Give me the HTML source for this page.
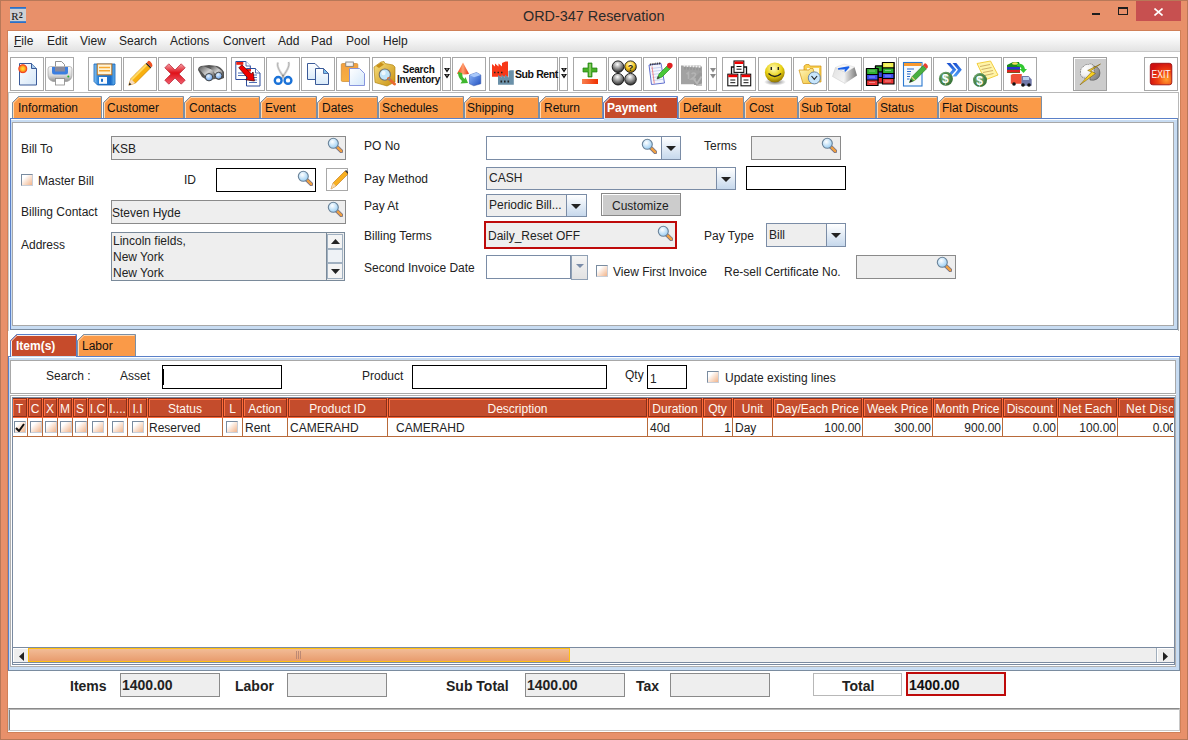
<!DOCTYPE html>
<html><head><meta charset="utf-8"><style>
html,body{margin:0;padding:0;width:1188px;height:740px;overflow:hidden;background:#E8906A;}
body{position:relative;font-family:"Liberation Sans", sans-serif;}
body div{position:absolute;}
.t{white-space:nowrap;}
</style></head><body>
<div style="left:0px;top:0px;width:1188px;height:740px;background:#E8906A;"></div>
<div style="left:0px;top:0px;width:1188px;height:1px;background:#B87858;"></div>
<div style="left:0px;top:0px;width:1px;height:740px;background:#B87858;"></div>
<div style="left:1187px;top:0px;width:1px;height:740px;background:#B87858;"></div>
<div style="left:0px;top:739px;width:1188px;height:1px;background:#B87858;"></div>
<svg style="position:absolute;left:10px;top:7px" width="16" height="16" viewBox="0 0 16 16"><rect width="16" height="16" fill="#CDD0D4"/><rect width="16" height="1.8" fill="#2A70C8"/><rect y="14.2" width="16" height="1.8" fill="#2A70C8"/><text x="1.2" y="13.2" font-size="11" font-family="Liberation Serif" fill="#111">R</text><text x="8.8" y="11.2" font-size="8" font-weight="bold" font-family="Liberation Serif" fill="#222">2</text></svg>
<div class="t" style="left:523px;top:9px;font-size:14.4px;line-height:15px;color:#2A2A2A">ORD-347 Reservation</div>
<div style="left:1092px;top:13px;width:8px;height:2px;background:#1E1E1E;"></div>
<div style="left:1118px;top:7px;width:10px;height:8px;border:1px solid #1E1E1E;border-top-width:2px;box-sizing:border-box;"></div>
<div style="left:1136px;top:1px;width:45px;height:20px;background:#C75050;"></div>
<svg style="position:absolute;left:1154px;top:8px" width="9" height="8" viewBox="0 0 9 8"><path d="M0.5 0.5 L8.5 7.5 M8.5 0.5 L0.5 7.5" stroke="#fff" stroke-width="1.6"/></svg>
<div style="left:7px;top:30px;width:1174px;height:703px;background:#fff;border:1px solid #D08058;box-sizing:border-box;"></div>
<div style="left:8px;top:31px;width:1172px;height:20px;background:linear-gradient(#ffffff,#fbfbfb 30%,#e3e3e3);"></div>
<div style="left:8px;top:51px;width:1172px;height:1px;background:#C8C8C8;"></div>
<div class="t" style="left:14px;top:35px;font-size:12px;line-height:12px;color:#222;"><u>F</u>ile</div>
<div class="t" style="left:47px;top:35px;font-size:12px;line-height:12px;color:#222;">Edit</div>
<div class="t" style="left:80px;top:35px;font-size:12px;line-height:12px;color:#222;">View</div>
<div class="t" style="left:119px;top:35px;font-size:12px;line-height:12px;color:#222;">Search</div>
<div class="t" style="left:170px;top:35px;font-size:12px;line-height:12px;color:#222;">Actions</div>
<div class="t" style="left:223px;top:35px;font-size:12px;line-height:12px;color:#222;">Convert</div>
<div class="t" style="left:278px;top:35px;font-size:12px;line-height:12px;color:#222;">Add</div>
<div class="t" style="left:311px;top:35px;font-size:12px;line-height:12px;color:#222;">Pad</div>
<div class="t" style="left:346px;top:35px;font-size:12px;line-height:12px;color:#222;">Pool</div>
<div class="t" style="left:383px;top:35px;font-size:12px;line-height:12px;color:#222;">Help</div>
<div style="left:10px;top:57px;width:34px;height:34px;border:1px solid #A8A8A8;box-sizing:border-box;background:#fff;"></div>
<svg style="position:absolute;left:10px;top:57px" width="34" height="34" viewBox="0 0 34 34"><defs><linearGradient id="pg1" x1="0" y1="0" x2="1" y2="1"><stop offset="0" stop-color="#FFFFFF"/><stop offset="1" stop-color="#D4E6F8"/></linearGradient><radialGradient id="sun" cx="0.5" cy="0.5" r="0.5"><stop offset="0" stop-color="#FFE040"/><stop offset="0.45" stop-color="#FFB020"/><stop offset="0.8" stop-color="#F04020"/><stop offset="1" stop-color="#F04020" stop-opacity="0"/></radialGradient></defs>
<path d="M9.5 6.5h12l5 5v16.5h-17z" fill="url(#pg1)" stroke="#3A5A98" stroke-width="1"/><path d="M21.5 6.5v5h5" fill="#A8CCEC" stroke="#3A5A98" stroke-width="1"/><circle cx="12.8" cy="11.7" r="5" fill="url(#sun)"/></svg>
<div style="left:45px;top:57px;width:29px;height:34px;border:1px solid #A8A8A8;box-sizing:border-box;background:#fff;"></div>
<svg style="position:absolute;left:45px;top:57px" width="34" height="34" viewBox="0 0 34 34"><defs><linearGradient id="pb" x1="0" y1="0" x2="0" y2="1"><stop offset="0" stop-color="#FAFAFA"/><stop offset="0.6" stop-color="#D8D8D8"/><stop offset="1" stop-color="#909090"/></linearGradient></defs>
<path d="M10.5 4.5h6l3 3v6h-9z" fill="#fff" stroke="#777" stroke-width="0.8"/><path d="M3 12q0-2.5 2.5-2.5h19q2.5 0 2.5 2.5v6q0 5-5 6.5H8q-5-1.5-5-6.5z" fill="url(#pb)" stroke="#999" stroke-width="0.6"/><path d="M7 10h16v5q0 2.5-2.5 2.5h-11q-2.5 0-2.5-2.5z" fill="#3C7EE0"/><rect x="10" y="10" width="10" height="4.5" fill="#8A8A9A"/><rect x="10.5" y="21.5" width="9" height="6.5" fill="#fff" stroke="#888" stroke-width="0.8"/><circle cx="23.3" cy="19.6" r="1" fill="#20B020"/></svg>
<div style="left:88px;top:57px;width:34px;height:34px;border:1px solid #A8A8A8;box-sizing:border-box;background:#fff;"></div>
<svg style="position:absolute;left:88px;top:57px" width="34" height="34" viewBox="0 0 34 34"><defs><linearGradient id="fl" x1="0" y1="0" x2="1" y2="0"><stop offset="0" stop-color="#8CC8F4"/><stop offset="0.2" stop-color="#2A82D8"/><stop offset="0.8" stop-color="#1A6CC8"/><stop offset="1" stop-color="#6AB8F0"/></linearGradient></defs>
<path d="M6 7h21v20l-1 1H9.5L6 24.5z" fill="url(#fl)" stroke="#1060B8" stroke-width="0.8"/><rect x="9.3" y="7" width="14.5" height="10.8" fill="#FFF4D8" stroke="#C07A28" stroke-width="1"/><path d="M11 10.5h11M11 13.8h11" stroke="#F8A830" stroke-width="1.6"/><rect x="11" y="20" width="8" height="6.8" fill="#F8FBFF"/><rect x="13" y="21.8" width="2" height="3" fill="#1A6CC8"/></svg>
<div style="left:123px;top:57px;width:34px;height:34px;border:1px solid #A8A8A8;box-sizing:border-box;background:#fff;"></div>
<svg style="position:absolute;left:123px;top:57px" width="34" height="34" viewBox="0 0 34 34"><defs><linearGradient id="pshadow" x1="0" y1="0" x2="1" y2="0"><stop offset="0" stop-color="#ccc" stop-opacity="0"/><stop offset="1" stop-color="#bbb" stop-opacity="0.7"/></linearGradient></defs>
<path d="M6 27 L14 14 L10 24z" fill="url(#pshadow)"/><path d="M5.8 28.2l2-6.5 15-15 4.5 4.5-15 15z" fill="#F8B010" stroke="#C87A00" stroke-width="0.6"/><path d="M8 21.8l14.8-14.8 1.5 1.5-14.8 14.8z" fill="#FFD860"/><path d="M5.8 28.2l2-6.5 4.5 4.5z" fill="#F6DCC0"/><path d="M5.8 28.2l0.8-2.6 1.8 1.8z" fill="#222"/><path d="M22.8 6.7l4.5 4.5 1-1-4.5-4.5z" fill="#222"/><path d="M23.8 5.7l4.5 4.5 1.2-1.2q0-2.5-2-4.3t-2.7-0.1z" fill="#F05020"/></svg>
<div style="left:158px;top:57px;width:34px;height:34px;border:1px solid #A8A8A8;box-sizing:border-box;background:#fff;"></div>
<svg style="position:absolute;left:158px;top:57px" width="34" height="34" viewBox="0 0 34 34"><defs><linearGradient id="xg" x1="0" y1="0" x2="0" y2="1"><stop offset="0" stop-color="#F4A0A8"/><stop offset="0.45" stop-color="#E01018"/><stop offset="1" stop-color="#F06070"/></linearGradient></defs>
<path d="M6.8 10.8l4-4 6.2 6.2 6.2-6.2 4 4-6.2 6.2 6.2 6.2-4 4-6.2-6.2-6.2 6.2-4-4 6.2-6.2z" fill="url(#xg)" stroke="#B82030" stroke-width="0.7"/></svg>
<div style="left:193px;top:57px;width:34px;height:34px;border:1px solid #A8A8A8;box-sizing:border-box;background:#fff;"></div>
<svg style="position:absolute;left:193px;top:57px" width="34" height="34" viewBox="0 0 34 34"><defs><linearGradient id="bg1" x1="0" y1="0" x2="1" y2="1"><stop offset="0" stop-color="#555"/><stop offset="0.5" stop-color="#D0D0D0"/><stop offset="1" stop-color="#444"/></linearGradient><radialGradient id="lens" cx="0.4" cy="0.35" r="0.6"><stop offset="0" stop-color="#E8F4FF"/><stop offset="1" stop-color="#70A8F0"/></radialGradient></defs>
<path d="M5 13q0-3 3-4l8-1 8 1q4 1 7 6l0 6-5 2-6-2-6 2-5-3z" fill="#555"/><path d="M6 12q1-2 4-3l10 4 2 9-6 1z" fill="url(#bg1)"/><path d="M17 10l5-1 7 5 1 5-5 2z" fill="url(#bg1)"/><circle cx="16" cy="20.2" r="3.7" fill="url(#lens)" stroke="#444" stroke-width="1"/><circle cx="25.6" cy="18.7" r="3.4" fill="url(#lens)" stroke="#444" stroke-width="1"/></svg>
<div style="left:231px;top:57px;width:34px;height:34px;border:1px solid #A8A8A8;box-sizing:border-box;background:#fff;"></div>
<svg style="position:absolute;left:231px;top:57px" width="34" height="34" viewBox="0 0 34 34"><path d="M4.8 4.5h10l4.5 4.5v13.5H4.8z" fill="#fff" stroke="#2C4C9C" stroke-width="1"/><rect x="5.3" y="5" width="7" height="2.8" fill="#F02010"/><path d="M15 4.5v4.5h4.5" fill="#fff" stroke="#2C4C9C" stroke-width="0.8"/><path d="M7 16h8M7 18.5h8" stroke="#3A60B0" stroke-width="0.9"/><path d="M15.5 11.5h9l4.5 4.5v13H15.5z" fill="#fff" stroke="#2C4C9C" stroke-width="1"/><rect x="16" y="12" width="4" height="2.5" fill="#F02010"/><path d="M24.5 11.5v4.5h4.5" fill="#fff" stroke="#2C4C9C" stroke-width="0.8"/><path d="M18 18h8M18 20.5h8M18 23h8M18 25.5h8" stroke="#3A60B0" stroke-width="0.9"/><path d="M7.8 10.8l3-3 9.5 9 1.8-1.8 1.3 9-8.7-1.2 1.9-1.9z" fill="#F00000" stroke="#400000" stroke-width="0.7"/></svg>
<div style="left:266px;top:57px;width:34px;height:34px;border:1px solid #A8A8A8;box-sizing:border-box;background:#fff;"></div>
<svg style="position:absolute;left:266px;top:57px" width="34" height="34" viewBox="0 0 34 34"><path d="M12 5.5q-1.5 3 2 9l4.8 7.5M22.5 5q1.5 3-2 9l-4.8 7.5" stroke="#D8D8D8" stroke-width="2.4" fill="none"/><path d="M12 5.5q-1.5 3 2 9l4.8 7.5M22.5 5q1.5 3-2 9l-4.8 7.5" stroke="#999" stroke-width="0.6" fill="none"/><circle cx="12.2" cy="23.4" r="3.4" fill="none" stroke="#1A72D8" stroke-width="2.4"/><circle cx="22" cy="23.4" r="3.4" fill="none" stroke="#1A72D8" stroke-width="2.4"/><circle cx="17" cy="18.5" r="1" fill="#888"/></svg>
<div style="left:301px;top:57px;width:34px;height:34px;border:1px solid #A8A8A8;box-sizing:border-box;background:#fff;"></div>
<svg style="position:absolute;left:301px;top:57px" width="34" height="34" viewBox="0 0 34 34"><defs><linearGradient id="cp" x1="0" y1="0" x2="0" y2="1"><stop offset="0" stop-color="#FFFFFF"/><stop offset="1" stop-color="#D8EAFA"/></linearGradient></defs>
<path d="M6.5 6.5h7.5l4 4v12h-11.5z" fill="url(#cp)" stroke="#3A5A98" stroke-width="1"/><path d="M14.5 11.5h8l5 5v11h-13z" fill="url(#cp)" stroke="#3A5A98" stroke-width="1"/><path d="M22.5 11.5v5h5z" fill="#7AC0F0" stroke="#3A5A98" stroke-width="0.8"/></svg>
<div style="left:336px;top:57px;width:34px;height:34px;border:1px solid #A8A8A8;box-sizing:border-box;background:#fff;"></div>
<svg style="position:absolute;left:336px;top:57px" width="34" height="34" viewBox="0 0 34 34"><defs><linearGradient id="cb" x1="0" y1="0" x2="0" y2="1"><stop offset="0" stop-color="#F4A040"/><stop offset="1" stop-color="#F8B040"/></linearGradient><linearGradient id="cp2" x1="0" y1="0" x2="1" y2="1"><stop offset="0" stop-color="#FFFFFF"/><stop offset="1" stop-color="#D4E8FA"/></linearGradient></defs>
<rect x="5.3" y="6.5" width="16.5" height="18" rx="1.2" fill="url(#cb)" stroke="#C88A30" stroke-width="0.7"/><rect x="9.8" y="5" width="7.5" height="4.3" fill="#F4F4F4" stroke="#777" stroke-width="0.8"/><path d="M13.5 11.5h10l5 5v12h-15z" fill="url(#cp2)" stroke="#7A8ADA" stroke-width="0.9"/></svg>
<div style="left:372px;top:57px;width:69px;height:34px;border:1px solid #A8A8A8;box-sizing:border-box;background:#fff;"></div>
<svg style="position:absolute;left:372px;top:57px" width="34" height="34" viewBox="0 0 34 34"><defs><linearGradient id="box1" x1="0" y1="0" x2="1" y2="1"><stop offset="0" stop-color="#F8E080"/><stop offset="1" stop-color="#C89010"/></linearGradient></defs><path d="M2 10l7-5 3-0.5 1 2 8 1.5 2 2v15l-8 4-12-3.5z" fill="url(#box1)" stroke="#A87800" stroke-width="0.6"/><path d="M4 9l5-3.5 3 2-5 3.5z" fill="#C8901A"/><circle cx="12.8" cy="17.6" r="5.6" fill="#C0E4FA" stroke="#707070" stroke-width="1.1"/><circle cx="11.5" cy="16" r="2.2" fill="#fff" opacity="0.7"/><path d="M16.5 21.5l6 5.5" stroke="#E86A30" stroke-width="3" stroke-linecap="round"/><path d="M16.5 21.5l1.5 1.4" stroke="#888" stroke-width="2.6"/></svg>
<div class="t" style="left:396px;top:65px;width:45px;font-size:10px;line-height:9.5px;font-weight:bold;color:#111;text-align:center;letter-spacing:-0.2px">Search<br>Inventory</div>
<div style="left:442px;top:57px;width:9px;height:34px;border:1px solid #A8A8A8;box-sizing:border-box;background:#fff;"></div>
<svg style="position:absolute;left:444px;top:68px" width="6" height="12" viewBox="0 0 6 12"><path d="M0 0h6L3 4.5z M0 6h6L3 10.5z" fill="#111"/><circle cx="3" cy="1.1" r="0.7" fill="#fff"/><circle cx="3" cy="7.1" r="0.7" fill="#fff"/></svg>
<div style="left:452px;top:57px;width:34px;height:34px;border:1px solid #A8A8A8;box-sizing:border-box;background:#fff;"></div>
<svg style="position:absolute;left:452px;top:57px" width="34" height="34" viewBox="0 0 34 34"><defs><linearGradient id="cone" x1="0" y1="0" x2="1" y2="0"><stop offset="0" stop-color="#F04010"/><stop offset="0.5" stop-color="#FFA070"/><stop offset="1" stop-color="#E03010"/></linearGradient><linearGradient id="cube" x1="0" y1="0" x2="1" y2="1"><stop offset="0" stop-color="#90B8F8"/><stop offset="1" stop-color="#2050C0"/></linearGradient></defs>
<path d="M11 5.5l6 11.2q-3 1.5-12 0z" fill="url(#cone)"/><path d="M6 15q0 6 4 9l-1.5 2.5 7.5-0.5-2.5-6-1 2q-2.5-2-2.5-6z" fill="#40B830"/><path d="M17.5 18l7-2.5 4.3 2.5v8.8l-7 2-4.3-2z" fill="url(#cube)" stroke="#2A4AA0" stroke-width="0.5"/><path d="M17.5 18l7-2.5 4.3 2.5-6.8 2.3z" fill="#A8C8FA"/></svg>
<div style="left:489px;top:57px;width:69px;height:34px;border:1px solid #A8A8A8;box-sizing:border-box;background:#fff;"></div>
<svg style="position:absolute;left:489px;top:57px" width="34" height="34" viewBox="0 0 34 34"><path d="M3 19.7V7l3 2.5V6.5l3.5 3V6.5l3.5 3V6l3.5-1.5 2.5 0v15.2z" fill="#F83818"/><path d="M5 15.5h1.5M8.5 15.5h1.5M12 15.5h1.5" stroke="#222" stroke-width="1.6"/><path d="M9 27.8V18l3.5 2.5v-3l3.5 3v-3l3.5 3v-6.5l2-0.8 3.3 0v14.6z" fill="#6A90A8"/><path d="M11.5 24.5h1.6M15 24.5h1.6M18.5 24.5h1.6" stroke="#222" stroke-width="1.8"/></svg>
<div class="t" style="left:515px;top:69px;font-size:10.5px;line-height:10px;font-weight:bold;color:#111;letter-spacing:-0.4px">Sub Rent</div>
<div style="left:559px;top:57px;width:9px;height:34px;border:1px solid #A8A8A8;box-sizing:border-box;background:#fff;"></div>
<svg style="position:absolute;left:561px;top:68px" width="6" height="12" viewBox="0 0 6 12"><path d="M0 0h6L3 4.5z M0 6h6L3 10.5z" fill="#111"/><circle cx="3" cy="1.1" r="0.7" fill="#fff"/><circle cx="3" cy="7.1" r="0.7" fill="#fff"/></svg>
<div style="left:573px;top:57px;width:34px;height:34px;border:1px solid #A8A8A8;box-sizing:border-box;background:#fff;"></div>
<svg style="position:absolute;left:573px;top:57px" width="34" height="34" viewBox="0 0 34 34"><defs><linearGradient id="plg" x1="0" y1="0" x2="1" y2="0"><stop offset="0" stop-color="#40A020"/><stop offset="0.5" stop-color="#D8F4B0"/><stop offset="1" stop-color="#40A020"/></linearGradient><linearGradient id="mg" x1="0" y1="0" x2="1" y2="0"><stop offset="0" stop-color="#F88050"/><stop offset="1" stop-color="#F03000"/></linearGradient></defs>
<path d="M15 6h4v5h5v4h-5v5h-4v-5h-5v-4h5z" fill="#48B028" stroke="#208010" stroke-width="0.7"/><rect x="15.8" y="7" width="2.4" height="12" fill="url(#plg)" opacity="0.8"/><rect x="9" y="22" width="16" height="5" fill="url(#mg)"/></svg>
<div style="left:608px;top:57px;width:34px;height:34px;border:1px solid #A8A8A8;box-sizing:border-box;background:#fff;"></div>
<svg style="position:absolute;left:608px;top:57px" width="34" height="34" viewBox="0 0 34 34"><defs><radialGradient id="gb" cx="0.45" cy="0.3" r="0.75"><stop offset="0" stop-color="#FFFFFF"/><stop offset="0.45" stop-color="#9A9A9A"/><stop offset="1" stop-color="#1A1A1A"/></radialGradient><radialGradient id="yb" cx="0.45" cy="0.3" r="0.75"><stop offset="0" stop-color="#FFFCD0"/><stop offset="0.5" stop-color="#F8C820"/><stop offset="1" stop-color="#705000"/></radialGradient></defs>
<g stroke="#111" stroke-width="0.9"><circle cx="10" cy="9.7" r="5.8" fill="url(#gb)"/><circle cx="22.5" cy="9.7" r="5.8" fill="url(#yb)"/><circle cx="10" cy="22.2" r="5.8" fill="url(#gb)"/><circle cx="22.5" cy="22.2" r="5.8" fill="url(#gb)"/></g><text x="19.8" y="13.5" font-size="9" font-weight="bold" fill="#222" font-family="Liberation Sans">?</text></svg>
<div style="left:643px;top:57px;width:34px;height:34px;border:1px solid #A8A8A8;box-sizing:border-box;background:#fff;"></div>
<svg style="position:absolute;left:643px;top:57px" width="34" height="34" viewBox="0 0 34 34"><path d="M6 8l12-1.5 3.5 19.5-13 1.5z" fill="#F4F6FE" stroke="#5060C8" stroke-width="0.9"/><path d="M7 7.5l11-1.3" stroke="#333" stroke-width="2" stroke-dasharray="1 0.8"/><path d="M8 11.5l11-1.3M8.5 14.5l11-1.3M9 17.5l11-1.3M9.5 20.5l11-1.3M10 23.5l10-1.2" stroke="#A8B8E8" stroke-width="0.6"/><path d="M9 9.5l2.3 17" stroke="#F07070" stroke-width="0.8"/><path d="M14 22l2-5 9-9 3 3-9 9z" fill="#48C838" stroke="#208010" stroke-width="0.6"/><path d="M14 22l1-3 2 2z" fill="#444"/><circle cx="26.8" cy="8.6" r="2.8" fill="#E02020"/></svg>
<div style="left:678px;top:57px;width:29px;height:34px;border:1px solid #A8A8A8;box-sizing:border-box;background:#fff;"></div>
<svg style="position:absolute;left:678px;top:57px" width="34" height="34" viewBox="0 0 34 34"><g transform="translate(-2,-0.5)"><path d="M5 9h19.5l1.5 1.5V27l-5.5 0.8H5z" fill="#A2A2A2"/><path d="M19 20l5-4 2 1v10l-5.5 1.5h-2.5z" fill="#9A9A9A"/><path d="M20 28.5h6" stroke="#999" stroke-width="1.2"/><g fill="#F0F0F0"><circle cx="8.5" cy="9.2" r="1.1"/><circle cx="11.5" cy="9.4" r="1.1"/><circle cx="14.5" cy="9.6" r="1.1"/><circle cx="17.5" cy="9.8" r="1.1"/><circle cx="20.5" cy="10" r="1.1"/><circle cx="23.5" cy="10.2" r="1.1"/></g><path d="M9 10.5v2.5M12 10.7v2.5M15 10.9v2.5M18 11.1v2.5M21 11.3v2.5M24 11.5v2.5" stroke="#8A8A8A" stroke-width="0.9"/><path d="M10.5 17.5l2-1.5v6.5M15.5 17.5q2.5-2 4 0q0.5 2-4 5h4.5" stroke="#B4B4B4" stroke-width="1.6" fill="none"/><path d="M18 23l3 4 4.5-7" stroke="#B8B8B8" stroke-width="1.8" fill="none"/></g></svg>
<div style="left:708px;top:57px;width:9px;height:34px;border:1px solid #A8A8A8;box-sizing:border-box;background:#fff;"></div>
<svg style="position:absolute;left:710px;top:68px" width="6" height="12" viewBox="0 0 6 12"><path d="M0 0h6L3 4.5z M0 6h6L3 10.5z" fill="#8A8A8A"/></svg>
<div style="left:722px;top:57px;width:34px;height:34px;border:1px solid #A8A8A8;box-sizing:border-box;background:#fff;"></div>
<svg style="position:absolute;left:722px;top:57px" width="34" height="34" viewBox="0 0 34 34"><path d="M9.5 17v-7h15v7" stroke="#111" stroke-width="1.3" fill="none"/><rect x="12" y="4" width="9.8" height="11.4" fill="#fff" stroke="#111" stroke-width="1.1"/><rect x="12.5" y="4.5" width="8.8" height="2.5" fill="#F00000"/><path d="M14.5 9.5h5M14.5 12.2h5" stroke="#111" stroke-width="1"/><rect x="5.8" y="17.2" width="10" height="11.6" fill="#fff" stroke="#111" stroke-width="1.1"/><rect x="6.3" y="17.7" width="9" height="2.5" fill="#F00000"/><path d="M8.3 23h5M8.3 25.7h5" stroke="#111" stroke-width="1"/><rect x="19" y="17.2" width="9.7" height="11.6" fill="#fff" stroke="#111" stroke-width="1.1"/><rect x="19.5" y="17.7" width="8.7" height="2.5" fill="#F00000"/><path d="M21.5 23h5M21.5 25.7h5" stroke="#111" stroke-width="1"/></svg>
<div style="left:758px;top:57px;width:34px;height:34px;border:1px solid #A8A8A8;box-sizing:border-box;background:#fff;"></div>
<svg style="position:absolute;left:758px;top:57px" width="34" height="34" viewBox="0 0 34 34"><defs><radialGradient id="sm" cx="0.45" cy="0.3" r="0.75"><stop offset="0" stop-color="#FFFCC0"/><stop offset="0.55" stop-color="#E8D010"/><stop offset="1" stop-color="#806400"/></radialGradient><radialGradient id="shd" cx="0.5" cy="0.5" r="0.5"><stop offset="0" stop-color="#333" stop-opacity="0.7"/><stop offset="1" stop-color="#333" stop-opacity="0"/></radialGradient></defs>
<ellipse cx="17" cy="25" rx="11" ry="3.5" fill="url(#shd)"/><circle cx="16.8" cy="15.4" r="9.9" fill="url(#sm)"/><path d="M13.3 10v3M20.3 10v3" stroke="#222" stroke-width="1.4"/><path d="M10.5 16.5q6.3 6 12.6 0" stroke="#222" stroke-width="1.4" fill="none"/></svg>
<div style="left:793px;top:57px;width:34px;height:34px;border:1px solid #A8A8A8;box-sizing:border-box;background:#fff;"></div>
<svg style="position:absolute;left:793px;top:57px" width="34" height="34" viewBox="0 0 34 34"><defs><linearGradient id="fo" x1="0" y1="0" x2="1" y2="1"><stop offset="0" stop-color="#FFF8C0"/><stop offset="1" stop-color="#F0C030"/></linearGradient></defs>
<path d="M11 9l2-1.5h3l1 1.5h11v16H11z" fill="#F8D050" stroke="#D09010" stroke-width="0.7"/><path d="M14 11h12v14H14z" fill="#FFFBE0"/><path d="M6 13h10l1-1.5h3l4 15H10z" fill="url(#fo)" stroke="#D09010" stroke-width="0.7"/><circle cx="21.3" cy="20.9" r="6" fill="#C8E6FC" stroke="#6A88A8" stroke-width="1"/><path d="M18.5 19l2.8 3.3 2.8-3.3" stroke="#222" stroke-width="1.1" fill="none"/></svg>
<div style="left:828px;top:57px;width:34px;height:34px;border:1px solid #A8A8A8;box-sizing:border-box;background:#fff;"></div>
<svg style="position:absolute;left:828px;top:57px" width="34" height="34" viewBox="0 0 34 34"><defs><linearGradient id="kr" x1="0" y1="0" x2="1" y2="0"><stop offset="0" stop-color="#E8E8E8"/><stop offset="1" stop-color="#7A7A7A"/></linearGradient><linearGradient id="kl" x1="0" y1="0" x2="1" y2="1"><stop offset="0" stop-color="#E0E0E0"/><stop offset="1" stop-color="#F8F8F8"/></linearGradient></defs>
<path d="M7.5 10.5L17.5 15.5 17 26.5 4.5 19.5z" fill="url(#kl)" stroke="#C8C8C8" stroke-width="0.5"/><path d="M17.5 15.5L26.5 10 29 18.5 17 26.5z" fill="url(#kr)"/><path d="M7.5 10.5L16 7 26.5 10 17.5 15.5z" fill="#F6F6F6" stroke="#D8D8D8" stroke-width="0.5"/><path d="M10.8 11.8l9.8-1.6M20.6 10.2l-3.3 3.6M13.5 11.5l3.8 0.2" stroke="#1A60E8" stroke-width="1.7" fill="none" stroke-linecap="round"/></svg>
<div style="left:863px;top:57px;width:34px;height:34px;border:1px solid #A8A8A8;box-sizing:border-box;background:#fff;"></div>
<svg style="position:absolute;left:863px;top:57px" width="34" height="34" viewBox="0 0 34 34"><g stroke="#000" stroke-width="1.2" stroke-linejoin="round"><rect x="12.5" y="9" width="12" height="17" fill="#E02A2A"/><rect x="12.5" y="9" width="12" height="6" fill="#28A028"/><rect x="12.5" y="15" width="12" height="5.5" fill="#3848E0"/><rect x="19.5" y="5.5" width="11.5" height="21.5" fill="#E83838"/><rect x="19.5" y="5.5" width="11.5" height="5.5" fill="#F0F050"/><rect x="19.5" y="11" width="11.5" height="5.5" fill="#30B030"/><rect x="19.5" y="16.5" width="11.5" height="5" fill="#4050F0"/><rect x="3.5" y="11.5" width="11.5" height="17" fill="#E83838"/><rect x="3.5" y="11.5" width="11.5" height="6" fill="#30B030"/><rect x="3.5" y="17.5" width="11.5" height="5.5" fill="#4050F0"/></g><path d="M6 14h6M6 20h6M6 25.5h6M22 8h6M22 13.5h6M22 19h6M22 24h6" stroke="#fff" stroke-width="0.8" opacity="0.5"/></svg>
<div style="left:898px;top:57px;width:34px;height:34px;border:1px solid #A8A8A8;box-sizing:border-box;background:#fff;"></div>
<svg style="position:absolute;left:898px;top:57px" width="34" height="34" viewBox="0 0 34 34"><rect x="5.5" y="5.5" width="18.5" height="23.5" fill="#F6FAFE" stroke="#2A78D0" stroke-width="1.1"/><rect x="6" y="6" width="17.5" height="3" fill="#F89A30"/><path d="M9 12h7M9 14.5h4M9 17h3.5M9 19.5h3M9 22h2.5" stroke="#2A6AC8" stroke-width="1"/><path d="M11.5 25.5l2.2-5.5 11.5-11.5 3.3 3.3-11.5 11.5z" fill="#48B040" stroke="#207010" stroke-width="0.6"/><path d="M11.5 25.5l1.2-3.2 2 2z" fill="#222"/><path d="M13.7 20l3.3 3.3" stroke="#E8D080" stroke-width="1.2"/><path d="M25.2 8.5l3.3 3.3 1.5-1.5q0-2-1.5-3.3t-2.5 0z" fill="#E84030"/></svg>
<div style="left:933px;top:57px;width:34px;height:34px;border:1px solid #A8A8A8;box-sizing:border-box;background:#fff;"></div>
<svg style="position:absolute;left:933px;top:57px" width="34" height="34" viewBox="0 0 34 34"><defs><radialGradient id="coin" cx="0.4" cy="0.35" r="0.7"><stop offset="0" stop-color="#8CC08C"/><stop offset="1" stop-color="#2E6A2E"/></radialGradient></defs>
<defs><linearGradient id="chev" x1="0" y1="0" x2="0" y2="1"><stop offset="0" stop-color="#1A50D0"/><stop offset="1" stop-color="#50A0F8"/></linearGradient></defs><path d="M13.5 6h3.8l6 6.8-6 6.7h-3.8l6-6.7z" fill="url(#chev)"/><path d="M19.5 6h3.8l5.5 6.8-5.5 6.7h-3.8l5.5-6.7z" fill="url(#chev)"/><circle cx="12.9" cy="21.8" r="7" fill="url(#coin)"/><circle cx="12.9" cy="21.8" r="5.3" fill="none" stroke="#3A7A3A" stroke-width="0.8"/><text x="9.1" y="26.3" font-size="12" font-weight="bold" fill="#fff" font-family="Liberation Sans">$</text></svg>
<div style="left:968px;top:57px;width:34px;height:34px;border:1px solid #A8A8A8;box-sizing:border-box;background:#fff;"></div>
<svg style="position:absolute;left:968px;top:57px" width="34" height="34" viewBox="0 0 34 34"><defs><radialGradient id="coin2" cx="0.4" cy="0.35" r="0.7"><stop offset="0" stop-color="#8CC08C"/><stop offset="1" stop-color="#2E6A2E"/></radialGradient></defs>
<path d="M9 6.5l13.5-2.5 7.5 14-13 5z" fill="#FFF4A8" stroke="#F0C830" stroke-width="0.9"/><path d="M12 9.5l10-2M13.5 12.5l10-2M15 15.5l10-2M16.5 18.5l9-2" stroke="#C8A860" stroke-width="0.9"/><circle cx="12" cy="23.1" r="7" fill="url(#coin2)"/><circle cx="12" cy="23.1" r="5.3" fill="none" stroke="#3A7A3A" stroke-width="0.8"/><text x="8.2" y="27.6" font-size="12" font-weight="bold" fill="#fff" font-family="Liberation Sans">$</text></svg>
<div style="left:1003px;top:57px;width:34px;height:34px;border:1px solid #A8A8A8;box-sizing:border-box;background:#fff;"></div>
<svg style="position:absolute;left:1003px;top:57px" width="34" height="34" viewBox="0 0 34 34"><path d="M4 8l6-3h6l1 3v8H4z" fill="#1A8A1A"/><rect x="4" y="10" width="13" height="2.5" fill="#2A30D0"/><rect x="4" y="13" width="13" height="2.5" fill="#E02020"/><ellipse cx="12" cy="6.5" rx="3" ry="1.3" fill="#F0E060"/><path d="M14 7q7-1 8 5h2l-3.5 4-4-4h2q-1-3-4.5-3z" fill="#30C830"/><path d="M7.8 18l2-1h9v9.7H7.8z" fill="#F05038"/><path d="M18.5 19h7l3.2 3.5v6.2H18.5z" fill="#7078A8"/><rect x="20" y="20" width="6" height="3" fill="#B8D0F0"/><circle cx="11" cy="27" r="1.8" fill="#111"/><circle cx="20" cy="28" r="1.8" fill="#111"/><circle cx="26" cy="28" r="1.8" fill="#111"/></svg>
<div style="left:1073px;top:57px;width:34px;height:34px;border:1px solid #A0A0A0;box-sizing:border-box;background:#CCCCCC;box-shadow:inset 1px 1px 0 #fff;"></div>
<svg style="position:absolute;left:1073px;top:57px" width="34" height="34" viewBox="0 0 34 34"><defs><radialGradient id="cl" cx="0.35" cy="0.35" r="0.75"><stop offset="0" stop-color="#FFFFFF"/><stop offset="0.6" stop-color="#F0F0F0"/><stop offset="1" stop-color="#B8B8B8"/></radialGradient><linearGradient id="cg" x1="0" y1="0" x2="1" y2="1"><stop offset="0" stop-color="#C0C0C0"/><stop offset="1" stop-color="#707070"/></linearGradient></defs>
<path d="M17 10q4-2 7 0q3 2 3 6q0 4-3 6q-3 2-7 1z" fill="url(#cg)" stroke="#444" stroke-width="0.5"/><path d="M7.5 15q0-4 3-5.5q2-2.5 5-2q2.5-1.5 4.5 0.5q2 2 1 4.5q1 3-1.5 5q-1.5 3-5 3q-2 1.5-4.5 0q-3-1-2.5-5.5z" fill="url(#cl)" stroke="#333" stroke-width="0.5" stroke-dasharray="1.2 0.8"/><path d="M27.5 7l-9.8 6.8 4.8 2.8-15.5 11.2 11.5-12.8-3.8-1.6z" fill="#F8D020" stroke="#705000" stroke-width="0.5"/></svg>
<div style="left:1144px;top:57px;width:34px;height:34px;border:1px solid #A8A8A8;box-sizing:border-box;background:#fff;"></div>
<svg style="position:absolute;left:1144px;top:57px" width="34" height="34" viewBox="0 0 34 34"><defs><radialGradient id="ex" cx="0.75" cy="0.75" r="0.8"><stop offset="0" stop-color="#FFA030"/><stop offset="0.5" stop-color="#F04010"/><stop offset="1" stop-color="#D01010"/></radialGradient></defs>
<rect x="6.3" y="6.3" width="21.5" height="21.5" rx="2.5" fill="url(#ex)" stroke="#9A1010" stroke-width="0.9"/><text x="7.6" y="21.2" font-size="10" fill="#fff" font-family="Liberation Sans" textLength="19" lengthAdjust="spacingAndGlyphs">EXIT</text></svg>
<div style="left:8px;top:92px;width:1171px;height:1px;background:#B8B8B8;"></div>
<div style="left:1178px;top:92px;width:1px;height:239px;background:#B8B8B8;"></div>
<div style="left:8px;top:92px;width:1px;height:239px;background:#C8C8C8;"></div>
<svg style="position:absolute;left:12px;top:96px" width="90" height="23" viewBox="0 0 90 23"><polygon points="0.5,23 0.5,6.5 6.5,0.5 89.5,0.5 89.5,23" fill="#FA9A48" stroke="#7A8FA6" stroke-width="1"/><polyline points="1.5,23 1.5,7 7,1.5 88.5,1.5" fill="none" stroke="#FFE8D0" stroke-width="1" opacity="0.8"/></svg>
<div class="t" style="left:18px;top:102px;font-size:12px;line-height:12px;color:#111;">Information</div>
<svg style="position:absolute;left:103px;top:96px" width="81" height="23" viewBox="0 0 81 23"><polygon points="0.5,23 0.5,6.5 6.5,0.5 80.5,0.5 80.5,23" fill="#FA9A48" stroke="#7A8FA6" stroke-width="1"/><polyline points="1.5,23 1.5,7 7,1.5 79.5,1.5" fill="none" stroke="#FFE8D0" stroke-width="1" opacity="0.8"/></svg>
<div class="t" style="left:107px;top:102px;font-size:12px;line-height:12px;color:#111;">Customer</div>
<svg style="position:absolute;left:184px;top:96px" width="76" height="23" viewBox="0 0 76 23"><polygon points="0.5,23 0.5,6.5 6.5,0.5 75.5,0.5 75.5,23" fill="#FA9A48" stroke="#7A8FA6" stroke-width="1"/><polyline points="1.5,23 1.5,7 7,1.5 74.5,1.5" fill="none" stroke="#FFE8D0" stroke-width="1" opacity="0.8"/></svg>
<div class="t" style="left:189px;top:102px;font-size:12px;line-height:12px;color:#111;">Contacts</div>
<svg style="position:absolute;left:260px;top:96px" width="57" height="23" viewBox="0 0 57 23"><polygon points="0.5,23 0.5,6.5 6.5,0.5 56.5,0.5 56.5,23" fill="#FA9A48" stroke="#7A8FA6" stroke-width="1"/><polyline points="1.5,23 1.5,7 7,1.5 55.5,1.5" fill="none" stroke="#FFE8D0" stroke-width="1" opacity="0.8"/></svg>
<div class="t" style="left:265px;top:102px;font-size:12px;line-height:12px;color:#111;">Event</div>
<svg style="position:absolute;left:317px;top:96px" width="61" height="23" viewBox="0 0 61 23"><polygon points="0.5,23 0.5,6.5 6.5,0.5 60.5,0.5 60.5,23" fill="#FA9A48" stroke="#7A8FA6" stroke-width="1"/><polyline points="1.5,23 1.5,7 7,1.5 59.5,1.5" fill="none" stroke="#FFE8D0" stroke-width="1" opacity="0.8"/></svg>
<div class="t" style="left:322px;top:102px;font-size:12px;line-height:12px;color:#111;">Dates</div>
<svg style="position:absolute;left:378px;top:96px" width="86" height="23" viewBox="0 0 86 23"><polygon points="0.5,23 0.5,6.5 6.5,0.5 85.5,0.5 85.5,23" fill="#FA9A48" stroke="#7A8FA6" stroke-width="1"/><polyline points="1.5,23 1.5,7 7,1.5 84.5,1.5" fill="none" stroke="#FFE8D0" stroke-width="1" opacity="0.8"/></svg>
<div class="t" style="left:382px;top:102px;font-size:12px;line-height:12px;color:#111;">Schedules</div>
<svg style="position:absolute;left:464px;top:96px" width="75" height="23" viewBox="0 0 75 23"><polygon points="0.5,23 0.5,6.5 6.5,0.5 74.5,0.5 74.5,23" fill="#FA9A48" stroke="#7A8FA6" stroke-width="1"/><polyline points="1.5,23 1.5,7 7,1.5 73.5,1.5" fill="none" stroke="#FFE8D0" stroke-width="1" opacity="0.8"/></svg>
<div class="t" style="left:467px;top:102px;font-size:12px;line-height:12px;color:#111;">Shipping</div>
<svg style="position:absolute;left:539px;top:96px" width="64" height="23" viewBox="0 0 64 23"><polygon points="0.5,23 0.5,6.5 6.5,0.5 63.5,0.5 63.5,23" fill="#FA9A48" stroke="#7A8FA6" stroke-width="1"/><polyline points="1.5,23 1.5,7 7,1.5 62.5,1.5" fill="none" stroke="#FFE8D0" stroke-width="1" opacity="0.8"/></svg>
<div class="t" style="left:544px;top:102px;font-size:12px;line-height:12px;color:#111;">Return</div>
<svg style="position:absolute;left:603px;top:96px" width="75" height="23" viewBox="0 0 75 23"><polygon points="0.5,23 0.5,6.5 6.5,0.5 74.5,0.5 74.5,23" fill="#C64B2B" stroke="#5A80C8" stroke-width="1"/><polyline points="1.5,23 1.5,7 7,1.5 73.5,1.5" fill="none" stroke="#fff" stroke-width="1" opacity="0.9"/></svg>
<div class="t" style="left:607px;top:102px;font-size:12px;line-height:12px;color:#fff;font-weight:bold;">Payment</div>
<svg style="position:absolute;left:678px;top:96px" width="66" height="23" viewBox="0 0 66 23"><polygon points="0.5,23 0.5,6.5 6.5,0.5 65.5,0.5 65.5,23" fill="#FA9A48" stroke="#7A8FA6" stroke-width="1"/><polyline points="1.5,23 1.5,7 7,1.5 64.5,1.5" fill="none" stroke="#FFE8D0" stroke-width="1" opacity="0.8"/></svg>
<div class="t" style="left:683px;top:102px;font-size:12px;line-height:12px;color:#111;">Default</div>
<svg style="position:absolute;left:744px;top:96px" width="54" height="23" viewBox="0 0 54 23"><polygon points="0.5,23 0.5,6.5 6.5,0.5 53.5,0.5 53.5,23" fill="#FA9A48" stroke="#7A8FA6" stroke-width="1"/><polyline points="1.5,23 1.5,7 7,1.5 52.5,1.5" fill="none" stroke="#FFE8D0" stroke-width="1" opacity="0.8"/></svg>
<div class="t" style="left:749px;top:102px;font-size:12px;line-height:12px;color:#111;">Cost</div>
<svg style="position:absolute;left:798px;top:96px" width="78" height="23" viewBox="0 0 78 23"><polygon points="0.5,23 0.5,6.5 6.5,0.5 77.5,0.5 77.5,23" fill="#FA9A48" stroke="#7A8FA6" stroke-width="1"/><polyline points="1.5,23 1.5,7 7,1.5 76.5,1.5" fill="none" stroke="#FFE8D0" stroke-width="1" opacity="0.8"/></svg>
<div class="t" style="left:801px;top:102px;font-size:12px;line-height:12px;color:#111;">Sub Total</div>
<svg style="position:absolute;left:876px;top:96px" width="62" height="23" viewBox="0 0 62 23"><polygon points="0.5,23 0.5,6.5 6.5,0.5 61.5,0.5 61.5,23" fill="#FA9A48" stroke="#7A8FA6" stroke-width="1"/><polyline points="1.5,23 1.5,7 7,1.5 60.5,1.5" fill="none" stroke="#FFE8D0" stroke-width="1" opacity="0.8"/></svg>
<div class="t" style="left:880px;top:102px;font-size:12px;line-height:12px;color:#111;">Status</div>
<svg style="position:absolute;left:938px;top:96px" width="104" height="23" viewBox="0 0 104 23"><polygon points="0.5,23 0.5,6.5 6.5,0.5 103.5,0.5 103.5,23" fill="#FA9A48" stroke="#7A8FA6" stroke-width="1"/><polyline points="1.5,23 1.5,7 7,1.5 102.5,1.5" fill="none" stroke="#FFE8D0" stroke-width="1" opacity="0.8"/></svg>
<div class="t" style="left:942px;top:102px;font-size:12px;line-height:12px;color:#111;">Flat Discounts</div>
<div style="left:10px;top:118px;width:1168px;height:212px;border-top:1px solid #5A80C8;border-left:1px solid #5A80C8;border-right:1px solid #7A8CA0;border-bottom:1px solid #7A8CA0;box-sizing:border-box;background:#C8DCF2;"></div>
<div style="left:11px;top:119px;width:1166px;height:1px;background:#fff;"></div>
<div style="left:12px;top:122px;width:1162px;height:204px;border:1px solid #A8A8A8;box-sizing:border-box;background:#fff;"></div>
<div style="left:604px;top:118px;width:73px;height:2px;background:#C8DCF2;"></div>
<div class="t" style="left:21px;top:143px;font-size:12px;line-height:12px;color:#222;">Bill To</div>
<div style="left:111px;top:136px;width:235px;height:24px;background:#EEEEEE;border:1px solid #8A8A8A;box-sizing:border-box;"></div>
<div class="t" style="left:112px;top:143px;font-size:12px;line-height:12px;color:#222;">KSB</div>
<svg style="position:absolute;left:327px;top:137px" width="16" height="16" viewBox="0 0 16 16"><defs><radialGradient id="lensg1" cx="0.4" cy="0.35" r="0.65"><stop offset="0" stop-color="#FFFFFF"/><stop offset="1" stop-color="#9CCFF4"/></radialGradient></defs><path d="M9.6 9.6l4.6 4.6" stroke="#70708A" stroke-width="4" stroke-linecap="round"/><path d="M10.2 10.2l4 4" stroke="#F0A040" stroke-width="2.4" stroke-linecap="round"/><circle cx="6.3" cy="6.3" r="5" fill="url(#lensg1)" stroke="#6A8298" stroke-width="1.1"/></svg>
<div style="left:21px;top:174px;width:12px;height:12px;background:linear-gradient(135deg,#FFFFFF 25%,#F2B48A);border:1px solid #7A8CA0;border-right-color:#C8CED8;border-bottom-color:#C8CED8;box-sizing:border-box;"></div>
<div class="t" style="left:38px;top:175px;font-size:12px;line-height:12px;color:#222;">Master Bill</div>
<div class="t" style="left:184px;top:174px;font-size:12px;line-height:12px;color:#222;">ID</div>
<div style="left:216px;top:168px;width:100px;height:24px;background:#fff;border:1px solid #000;box-sizing:border-box;"></div>
<svg style="position:absolute;left:297px;top:170px" width="16" height="16" viewBox="0 0 16 16"><defs><radialGradient id="lensg2" cx="0.4" cy="0.35" r="0.65"><stop offset="0" stop-color="#FFFFFF"/><stop offset="1" stop-color="#9CCFF4"/></radialGradient></defs><path d="M9.6 9.6l4.6 4.6" stroke="#70708A" stroke-width="4" stroke-linecap="round"/><path d="M10.2 10.2l4 4" stroke="#F0A040" stroke-width="2.4" stroke-linecap="round"/><circle cx="6.3" cy="6.3" r="5" fill="url(#lensg2)" stroke="#6A8298" stroke-width="1.1"/></svg>
<div style="left:326px;top:168px;width:22px;height:23px;border:1px solid #A8A8A8;box-sizing:border-box;background:#fff;"></div>
<svg style="position:absolute;left:328px;top:169px" width="20" height="21" viewBox="0 0 20 21"><path d="M3 20l2-6 12-12 3 3-12 12z" fill="#F8B020" stroke="#C07010" stroke-width="0.6"/><path d="M3 20l2-6 3 3z" fill="#F4D8B0"/><path d="M17 2l3 3 1-1-3-3z" fill="#333"/></svg>
<div class="t" style="left:21px;top:206px;font-size:12px;line-height:12px;color:#222;">Billing Contact</div>
<div style="left:111px;top:200px;width:235px;height:24px;background:#EEEEEE;border:1px solid #8A8A8A;box-sizing:border-box;"></div>
<div class="t" style="left:112px;top:207px;font-size:12px;line-height:12px;color:#222;">Steven Hyde</div>
<svg style="position:absolute;left:327px;top:201px" width="16" height="16" viewBox="0 0 16 16"><defs><radialGradient id="lensg3" cx="0.4" cy="0.35" r="0.65"><stop offset="0" stop-color="#FFFFFF"/><stop offset="1" stop-color="#9CCFF4"/></radialGradient></defs><path d="M9.6 9.6l4.6 4.6" stroke="#70708A" stroke-width="4" stroke-linecap="round"/><path d="M10.2 10.2l4 4" stroke="#F0A040" stroke-width="2.4" stroke-linecap="round"/><circle cx="6.3" cy="6.3" r="5" fill="url(#lensg3)" stroke="#6A8298" stroke-width="1.1"/></svg>
<div class="t" style="left:21px;top:239px;font-size:12px;line-height:12px;color:#222;">Address</div>
<div style="left:111px;top:232px;width:234px;height:49px;background:#EEEEEE;border:1px solid #7A8A9A;box-sizing:border-box;"></div>
<div class="t" style="left:113px;top:235px;font-size:12px;line-height:12px;color:#222;">Lincoln fields,</div>
<div class="t" style="left:113px;top:251px;font-size:12px;line-height:12px;color:#222;">New York</div>
<div class="t" style="left:113px;top:267px;font-size:12px;line-height:12px;color:#222;">New York</div>
<div style="left:326px;top:233px;width:18px;height:47px;background:#EEEEEE;border-left:1px solid #7A8A9A;box-sizing:border-box;"></div>
<div style="left:327px;top:234px;width:16px;height:15px;border:1px solid #A0B0C0;box-sizing:border-box;background:#F4F4F4;"></div>
<svg style="position:absolute;left:331px;top:239px" width="9" height="5" viewBox="0 0 9 5"><path d="M0 5h9L4.5 0z" fill="#222"/></svg>
<div style="left:327px;top:249px;width:16px;height:14px;border:1px solid #A0B0C0;box-sizing:border-box;background:#EEF2F6;"></div>
<div style="left:327px;top:263px;width:16px;height:16px;border:1px solid #A0B0C0;box-sizing:border-box;background:#F4F4F4;"></div>
<svg style="position:absolute;left:331px;top:269px" width="9" height="5" viewBox="0 0 9 5"><path d="M0 0h9L4.5 5z" fill="#222"/></svg>
<div class="t" style="left:364px;top:140px;font-size:12px;line-height:12px;color:#222;">PO No</div>
<div style="left:486px;top:136px;width:176px;height:24px;background:#fff;border:1px solid #7A8CA6;box-sizing:border-box;"></div>
<svg style="position:absolute;left:641px;top:138px" width="16" height="16" viewBox="0 0 16 16"><defs><radialGradient id="lensg4" cx="0.4" cy="0.35" r="0.65"><stop offset="0" stop-color="#FFFFFF"/><stop offset="1" stop-color="#9CCFF4"/></radialGradient></defs><path d="M9.6 9.6l4.6 4.6" stroke="#70708A" stroke-width="4" stroke-linecap="round"/><path d="M10.2 10.2l4 4" stroke="#F0A040" stroke-width="2.4" stroke-linecap="round"/><circle cx="6.3" cy="6.3" r="5" fill="url(#lensg4)" stroke="#6A8298" stroke-width="1.1"/></svg>
<div style="left:661px;top:136px;width:20px;height:24px;background:linear-gradient(#FFFFFF,#C6D8EC);border:1px solid #7A8CA6;box-sizing:border-box;"></div>
<svg style="position:absolute;left:666px;top:146px" width="10" height="5" viewBox="0 0 10 5"><path d="M0 0h10L5 5z" fill="#222"/></svg>
<div class="t" style="left:364px;top:173px;font-size:12px;line-height:12px;color:#222;">Pay Method</div>
<div style="left:486px;top:167px;width:231px;height:23px;background:#EEEEEE;border:1px solid #7A8CA6;box-sizing:border-box;"></div>
<div class="t" style="left:489px;top:172px;font-size:12px;line-height:12px;color:#222;">CASH</div>
<div style="left:716px;top:167px;width:20px;height:23px;background:linear-gradient(#FFFFFF,#C6D8EC);border:1px solid #7A8CA6;box-sizing:border-box;"></div>
<svg style="position:absolute;left:721px;top:177px" width="10" height="5" viewBox="0 0 10 5"><path d="M0 0h10L5 5z" fill="#222"/></svg>
<div style="left:746px;top:166px;width:100px;height:24px;background:#fff;border:1px solid #000;box-sizing:border-box;"></div>
<div class="t" style="left:364px;top:200px;font-size:12px;line-height:12px;color:#222;">Pay At</div>
<div style="left:486px;top:194px;width:81px;height:23px;background:#EEEEEE;border:1px solid #7A8CA6;box-sizing:border-box;"></div>
<div class="t" style="left:489px;top:199px;font-size:12px;line-height:12px;color:#222;">Periodic Bill...</div>
<div style="left:566px;top:194px;width:21px;height:23px;background:linear-gradient(#FFFFFF,#C6D8EC);border:1px solid #7A8CA6;box-sizing:border-box;"></div>
<svg style="position:absolute;left:571px;top:204px" width="10" height="5" viewBox="0 0 10 5"><path d="M0 0h10L5 5z" fill="#222"/></svg>
<div style="left:601px;top:193px;width:80px;height:23px;background:#CCCCCC;border:1px solid #888;box-sizing:border-box;box-shadow:inset 1px 1px 0 #fff;"></div>
<div class="t" style="left:612px;top:200px;font-size:12px;line-height:12px;color:#222;">Customize</div>
<div class="t" style="left:364px;top:230px;font-size:12px;line-height:12px;color:#222;">Billing Terms</div>
<div style="left:484px;top:221px;width:193px;height:28px;background:#EEEEEE;border:2px solid #BE0A0A;box-sizing:border-box;"></div>
<div class="t" style="left:488px;top:230px;font-size:12px;line-height:12px;color:#222;">Daily_Reset OFF</div>
<svg style="position:absolute;left:657px;top:225px" width="16" height="16" viewBox="0 0 16 16"><defs><radialGradient id="lensg5" cx="0.4" cy="0.35" r="0.65"><stop offset="0" stop-color="#FFFFFF"/><stop offset="1" stop-color="#9CCFF4"/></radialGradient></defs><path d="M9.6 9.6l4.6 4.6" stroke="#70708A" stroke-width="4" stroke-linecap="round"/><path d="M10.2 10.2l4 4" stroke="#F0A040" stroke-width="2.4" stroke-linecap="round"/><circle cx="6.3" cy="6.3" r="5" fill="url(#lensg5)" stroke="#6A8298" stroke-width="1.1"/></svg>
<div class="t" style="left:364px;top:262px;font-size:12px;line-height:12px;color:#222;">Second Invoice Date</div>
<div style="left:486px;top:255px;width:85px;height:24px;background:#fff;border:1px solid #7A8CA6;box-sizing:border-box;"></div>
<div style="left:571px;top:255px;width:17px;height:25px;background:linear-gradient(#F4F4F4,#E2E2E2);border:1px solid #8FA0B4;box-sizing:border-box;"></div>
<svg style="position:absolute;left:576px;top:264px" width="8" height="4" viewBox="0 0 8 4"><path d="M0 0h8L4 4z" fill="#7A8CA8"/></svg>
<div style="left:596px;top:265px;width:12px;height:12px;background:linear-gradient(135deg,#FFFFFF 25%,#F2B48A);border:1px solid #7A8CA0;border-right-color:#C8CED8;border-bottom-color:#C8CED8;box-sizing:border-box;"></div>
<div class="t" style="left:613px;top:266px;font-size:12px;line-height:12px;color:#222;">View First Invoice</div>
<div class="t" style="left:704px;top:140px;font-size:12px;line-height:12px;color:#222;">Terms</div>
<div style="left:751px;top:136px;width:90px;height:24px;background:#EEEEEE;border:1px solid #8A8A8A;box-sizing:border-box;"></div>
<svg style="position:absolute;left:821px;top:137px" width="16" height="16" viewBox="0 0 16 16"><defs><radialGradient id="lensg6" cx="0.4" cy="0.35" r="0.65"><stop offset="0" stop-color="#FFFFFF"/><stop offset="1" stop-color="#9CCFF4"/></radialGradient></defs><path d="M9.6 9.6l4.6 4.6" stroke="#70708A" stroke-width="4" stroke-linecap="round"/><path d="M10.2 10.2l4 4" stroke="#F0A040" stroke-width="2.4" stroke-linecap="round"/><circle cx="6.3" cy="6.3" r="5" fill="url(#lensg6)" stroke="#6A8298" stroke-width="1.1"/></svg>
<div class="t" style="left:704px;top:230px;font-size:12px;line-height:12px;color:#222;">Pay Type</div>
<div style="left:766px;top:223px;width:61px;height:24px;background:#EEEEEE;border:1px solid #7A8CA6;box-sizing:border-box;"></div>
<div class="t" style="left:769px;top:229px;font-size:12px;line-height:12px;color:#222;">Bill</div>
<div style="left:826px;top:223px;width:20px;height:24px;background:linear-gradient(#FFFFFF,#C6D8EC);border:1px solid #7A8CA6;box-sizing:border-box;"></div>
<svg style="position:absolute;left:831px;top:233px" width="10" height="5" viewBox="0 0 10 5"><path d="M0 0h10L5 5z" fill="#222"/></svg>
<div class="t" style="left:724px;top:266px;font-size:12px;line-height:12px;color:#222;">Re-sell Certificate No.</div>
<div style="left:856px;top:255px;width:100px;height:24px;background:#EEEEEE;border:1px solid #8A8A8A;box-sizing:border-box;"></div>
<svg style="position:absolute;left:936px;top:256px" width="16" height="16" viewBox="0 0 16 16"><defs><radialGradient id="lensg7" cx="0.4" cy="0.35" r="0.65"><stop offset="0" stop-color="#FFFFFF"/><stop offset="1" stop-color="#9CCFF4"/></radialGradient></defs><path d="M9.6 9.6l4.6 4.6" stroke="#70708A" stroke-width="4" stroke-linecap="round"/><path d="M10.2 10.2l4 4" stroke="#F0A040" stroke-width="2.4" stroke-linecap="round"/><circle cx="6.3" cy="6.3" r="5" fill="url(#lensg7)" stroke="#6A8298" stroke-width="1.1"/></svg>
<svg style="position:absolute;left:10px;top:334px" width="67" height="23" viewBox="0 0 67 23"><polygon points="0.5,23 0.5,6.5 6.5,0.5 66.5,0.5 66.5,23" fill="#C64B2B" stroke="#5A80C8" stroke-width="1"/><polyline points="1.5,23 1.5,7 7,1.5 65.5,1.5" fill="none" stroke="#fff" stroke-width="1" opacity="0.9"/></svg>
<div class="t" style="left:16px;top:340px;font-size:12px;line-height:12px;color:#fff;font-weight:bold;">Item(s)</div>
<svg style="position:absolute;left:77px;top:334px" width="59" height="23" viewBox="0 0 59 23"><polygon points="0.5,23 0.5,6.5 6.5,0.5 58.5,0.5 58.5,23" fill="#FA9A48" stroke="#7A8FA6" stroke-width="1"/><polyline points="1.5,23 1.5,7 7,1.5 57.5,1.5" fill="none" stroke="#FFE8D0" stroke-width="1" opacity="0.8"/></svg>
<div class="t" style="left:82px;top:340px;font-size:12px;line-height:12px;color:#111;">Labor</div>
<div style="left:8px;top:356px;width:1172px;height:315px;border-top:1px solid #5A80C8;border-left:1px solid #5A80C8;border-right:1px solid #7A8CA0;border-bottom:1px solid #7A8CA0;box-sizing:border-box;background:#C8DCF2;"></div>
<div style="left:11px;top:356px;width:65px;height:2px;background:#C8DCF2;"></div>
<div style="left:9px;top:357px;width:1170px;height:1px;background:#fff;"></div>
<div style="left:10px;top:360px;width:1166px;height:34px;border:1px solid #A8A8A8;box-sizing:border-box;background:#fff;"></div>
<div style="left:10px;top:394px;width:1166px;height:1px;background:#fff;"></div>
<div class="t" style="left:46px;top:370px;font-size:12px;line-height:12px;color:#222;">Search :</div>
<div class="t" style="left:120px;top:370px;font-size:12px;line-height:12px;color:#222;">Asset</div>
<div style="left:162px;top:365px;width:120px;height:24px;background:#fff;border:1px solid #000;box-sizing:border-box;"></div>
<div style="left:163px;top:369px;width:1px;height:16px;background:#000;"></div>
<div class="t" style="left:362px;top:370px;font-size:12px;line-height:12px;color:#222;">Product</div>
<div style="left:412px;top:365px;width:195px;height:24px;background:#fff;border:1px solid #000;box-sizing:border-box;"></div>
<div class="t" style="left:625px;top:369px;font-size:12px;line-height:12px;color:#222;">Qty</div>
<div style="left:647px;top:365px;width:40px;height:24px;background:#fff;border:1px solid #000;box-sizing:border-box;"></div>
<div class="t" style="left:650px;top:373px;font-size:12px;line-height:12px;color:#222;">1</div>
<div style="left:707px;top:371px;width:12px;height:12px;background:linear-gradient(135deg,#FFFFFF 25%,#F2B48A);border:1px solid #7A8CA0;border-right-color:#C8CED8;border-bottom-color:#C8CED8;box-sizing:border-box;"></div>
<div class="t" style="left:725px;top:372px;font-size:12px;line-height:12px;color:#222;">Update existing lines</div>
<div style="left:10px;top:395px;width:1166px;height:272px;border:1px solid #B0B0B0;box-sizing:border-box;background:#fff;"></div>
<div style="left:12px;top:397px;width:1163px;height:268px;border:1px solid #7A8AA0;box-sizing:border-box;background:#fff;"></div>
<div style="left:13px;top:398px;width:1161px;height:20px;overflow:hidden;background:#FF6A3A">
<div style="left:-1px;top:0;width:15px;height:19px;box-sizing:border-box;border:1px solid #8A3018;box-shadow:inset 1px 1px 0 #FF7040;background:#C44C2C;"></div>
<div style="left:15px;top:0;width:14px;height:19px;box-sizing:border-box;border:1px solid #8A3018;box-shadow:inset 1px 1px 0 #FF7040;background:#C44C2C;"></div>
<div style="left:30px;top:0;width:14px;height:19px;box-sizing:border-box;border:1px solid #8A3018;box-shadow:inset 1px 1px 0 #FF7040;background:#C44C2C;"></div>
<div style="left:45px;top:0;width:14px;height:19px;box-sizing:border-box;border:1px solid #8A3018;box-shadow:inset 1px 1px 0 #FF7040;background:#C44C2C;"></div>
<div style="left:60px;top:0;width:14px;height:19px;box-sizing:border-box;border:1px solid #8A3018;box-shadow:inset 1px 1px 0 #FF7040;background:#C44C2C;"></div>
<div style="left:75px;top:0;width:19px;height:19px;box-sizing:border-box;border:1px solid #8A3018;box-shadow:inset 1px 1px 0 #FF7040;background:#C44C2C;"></div>
<div style="left:95px;top:0;width:19px;height:19px;box-sizing:border-box;border:1px solid #8A3018;box-shadow:inset 1px 1px 0 #FF7040;background:#C44C2C;"></div>
<div style="left:115px;top:0;width:19px;height:19px;box-sizing:border-box;border:1px solid #8A3018;box-shadow:inset 1px 1px 0 #FF7040;background:#C44C2C;"></div>
<div style="left:135px;top:0;width:74px;height:19px;box-sizing:border-box;border:1px solid #8A3018;box-shadow:inset 1px 1px 0 #FF7040;background:#C44C2C;"></div>
<div style="left:210px;top:0;width:19px;height:19px;box-sizing:border-box;border:1px solid #8A3018;box-shadow:inset 1px 1px 0 #FF7040;background:#C44C2C;"></div>
<div style="left:230px;top:0;width:44px;height:19px;box-sizing:border-box;border:1px solid #8A3018;box-shadow:inset 1px 1px 0 #FF7040;background:#C44C2C;"></div>
<div style="left:275px;top:0;width:99px;height:19px;box-sizing:border-box;border:1px solid #8A3018;box-shadow:inset 1px 1px 0 #FF7040;background:#C44C2C;"></div>
<div style="left:375px;top:0;width:259px;height:19px;box-sizing:border-box;border:1px solid #8A3018;box-shadow:inset 1px 1px 0 #FF7040;background:#C44C2C;"></div>
<div style="left:635px;top:0;width:54px;height:19px;box-sizing:border-box;border:1px solid #8A3018;box-shadow:inset 1px 1px 0 #FF7040;background:#C44C2C;"></div>
<div style="left:690px;top:0;width:29px;height:19px;box-sizing:border-box;border:1px solid #8A3018;box-shadow:inset 1px 1px 0 #FF7040;background:#C44C2C;"></div>
<div style="left:720px;top:0;width:39px;height:19px;box-sizing:border-box;border:1px solid #8A3018;box-shadow:inset 1px 1px 0 #FF7040;background:#C44C2C;"></div>
<div style="left:760px;top:0;width:89px;height:19px;box-sizing:border-box;border:1px solid #8A3018;box-shadow:inset 1px 1px 0 #FF7040;background:#C44C2C;"></div>
<div style="left:850px;top:0;width:69px;height:19px;box-sizing:border-box;border:1px solid #8A3018;box-shadow:inset 1px 1px 0 #FF7040;background:#C44C2C;"></div>
<div style="left:920px;top:0;width:69px;height:19px;box-sizing:border-box;border:1px solid #8A3018;box-shadow:inset 1px 1px 0 #FF7040;background:#C44C2C;"></div>
<div style="left:990px;top:0;width:54px;height:19px;box-sizing:border-box;border:1px solid #8A3018;box-shadow:inset 1px 1px 0 #FF7040;background:#C44C2C;"></div>
<div style="left:1045px;top:0;width:59px;height:19px;box-sizing:border-box;border:1px solid #8A3018;box-shadow:inset 1px 1px 0 #FF7040;background:#C44C2C;"></div>
<div style="left:1105px;top:0;width:82px;height:19px;box-sizing:border-box;border:1px solid #8A3018;box-shadow:inset 1px 1px 0 #FF7040;background:#C44C2C;"></div>
</div>
<div class="t" style="left:12px;width:15px;top:403px;font-size:12px;line-height:12px;color:#FFF8F0;text-align:center;">T</div>
<div class="t" style="left:28px;width:14px;top:403px;font-size:12px;line-height:12px;color:#FFF8F0;text-align:center;">C</div>
<div class="t" style="left:43px;width:14px;top:403px;font-size:12px;line-height:12px;color:#FFF8F0;text-align:center;">X</div>
<div class="t" style="left:58px;width:14px;top:403px;font-size:12px;line-height:12px;color:#FFF8F0;text-align:center;">M</div>
<div class="t" style="left:73px;width:14px;top:403px;font-size:12px;line-height:12px;color:#FFF8F0;text-align:center;">S</div>
<div class="t" style="left:88px;width:19px;top:403px;font-size:12px;line-height:12px;color:#FFF8F0;text-align:center;">I.C</div>
<div class="t" style="left:108px;width:19px;top:403px;font-size:12px;line-height:12px;color:#FFF8F0;text-align:center;">I....</div>
<div class="t" style="left:128px;width:19px;top:403px;font-size:12px;line-height:12px;color:#FFF8F0;text-align:center;">I.I</div>
<div class="t" style="left:148px;width:74px;top:403px;font-size:12px;line-height:12px;color:#FFF8F0;text-align:center;">Status</div>
<div class="t" style="left:223px;width:19px;top:403px;font-size:12px;line-height:12px;color:#FFF8F0;text-align:center;">L</div>
<div class="t" style="left:243px;width:44px;top:403px;font-size:12px;line-height:12px;color:#FFF8F0;text-align:center;">Action</div>
<div class="t" style="left:288px;width:99px;top:403px;font-size:12px;line-height:12px;color:#FFF8F0;text-align:center;">Product ID</div>
<div class="t" style="left:388px;width:259px;top:403px;font-size:12px;line-height:12px;color:#FFF8F0;text-align:center;">Description</div>
<div class="t" style="left:648px;width:54px;top:403px;font-size:12px;line-height:12px;color:#FFF8F0;text-align:center;">Duration</div>
<div class="t" style="left:703px;width:29px;top:403px;font-size:12px;line-height:12px;color:#FFF8F0;text-align:center;">Qty</div>
<div class="t" style="left:733px;width:39px;top:403px;font-size:12px;line-height:12px;color:#FFF8F0;text-align:center;">Unit</div>
<div class="t" style="left:773px;width:89px;top:403px;font-size:12px;line-height:12px;color:#FFF8F0;text-align:center;">Day/Each Price</div>
<div class="t" style="left:863px;width:69px;top:403px;font-size:12px;line-height:12px;color:#FFF8F0;text-align:center;">Week Price</div>
<div class="t" style="left:933px;width:69px;top:403px;font-size:12px;line-height:12px;color:#FFF8F0;text-align:center;">Month Price</div>
<div class="t" style="left:1003px;width:54px;top:403px;font-size:12px;line-height:12px;color:#FFF8F0;text-align:center;">Discount</div>
<div class="t" style="left:1058px;width:59px;top:403px;font-size:12px;line-height:12px;color:#FFF8F0;text-align:center;">Net Each</div>
<div class="t" style="left:1118px;width:55px;top:403px;height:13px;overflow:hidden;font-size:12px;line-height:12px;color:#FFF8F0;"><div style="position:absolute;left:8px;top:0;letter-spacing:0.4px">Net Disc</div></div>
<div style="left:13px;top:436px;width:1161px;height:1px;background:#B86A3A;"></div>
<div style="left:27px;top:418px;width:1px;height:19px;background:#B86A3A;"></div>
<div style="left:42px;top:418px;width:1px;height:19px;background:#B86A3A;"></div>
<div style="left:57px;top:418px;width:1px;height:19px;background:#B86A3A;"></div>
<div style="left:72px;top:418px;width:1px;height:19px;background:#B86A3A;"></div>
<div style="left:87px;top:418px;width:1px;height:19px;background:#B86A3A;"></div>
<div style="left:107px;top:418px;width:1px;height:19px;background:#B86A3A;"></div>
<div style="left:127px;top:418px;width:1px;height:19px;background:#B86A3A;"></div>
<div style="left:147px;top:418px;width:1px;height:19px;background:#B86A3A;"></div>
<div style="left:222px;top:418px;width:1px;height:19px;background:#B86A3A;"></div>
<div style="left:242px;top:418px;width:1px;height:19px;background:#B86A3A;"></div>
<div style="left:287px;top:418px;width:1px;height:19px;background:#B86A3A;"></div>
<div style="left:387px;top:418px;width:1px;height:19px;background:#B86A3A;"></div>
<div style="left:647px;top:418px;width:1px;height:19px;background:#B86A3A;"></div>
<div style="left:702px;top:418px;width:1px;height:19px;background:#B86A3A;"></div>
<div style="left:732px;top:418px;width:1px;height:19px;background:#B86A3A;"></div>
<div style="left:772px;top:418px;width:1px;height:19px;background:#B86A3A;"></div>
<div style="left:862px;top:418px;width:1px;height:19px;background:#B86A3A;"></div>
<div style="left:932px;top:418px;width:1px;height:19px;background:#B86A3A;"></div>
<div style="left:1002px;top:418px;width:1px;height:19px;background:#B86A3A;"></div>
<div style="left:1057px;top:418px;width:1px;height:19px;background:#B86A3A;"></div>
<div style="left:1117px;top:418px;width:1px;height:19px;background:#B86A3A;"></div>
<div style="left:14px;top:421px;width:12px;height:12px;background:linear-gradient(135deg,#FFFFFF 25%,#F2B48A);border:1px solid #7A8CA0;border-right-color:#C8CED8;border-bottom-color:#C8CED8;box-sizing:border-box;"></div>
<svg style="position:absolute;left:15px;top:423px" width="10" height="9" viewBox="0 0 10 9"><path d="M1 5l3 3 5-7" stroke="#111" stroke-width="2" fill="none"/></svg>
<div style="left:30px;top:421px;width:12px;height:12px;background:linear-gradient(135deg,#FFFFFF 25%,#F2B48A);border:1px solid #7A8CA0;border-right-color:#C8CED8;border-bottom-color:#C8CED8;box-sizing:border-box;"></div>
<div style="left:45px;top:421px;width:12px;height:12px;background:linear-gradient(135deg,#FFFFFF 25%,#F2B48A);border:1px solid #7A8CA0;border-right-color:#C8CED8;border-bottom-color:#C8CED8;box-sizing:border-box;"></div>
<div style="left:60px;top:421px;width:12px;height:12px;background:linear-gradient(135deg,#FFFFFF 25%,#F2B48A);border:1px solid #7A8CA0;border-right-color:#C8CED8;border-bottom-color:#C8CED8;box-sizing:border-box;"></div>
<div style="left:75px;top:421px;width:12px;height:12px;background:linear-gradient(135deg,#FFFFFF 25%,#F2B48A);border:1px solid #7A8CA0;border-right-color:#C8CED8;border-bottom-color:#C8CED8;box-sizing:border-box;"></div>
<div style="left:92px;top:421px;width:12px;height:12px;background:linear-gradient(135deg,#FFFFFF 25%,#F2B48A);border:1px solid #7A8CA0;border-right-color:#C8CED8;border-bottom-color:#C8CED8;box-sizing:border-box;"></div>
<div style="left:112px;top:421px;width:12px;height:12px;background:linear-gradient(135deg,#FFFFFF 25%,#F2B48A);border:1px solid #7A8CA0;border-right-color:#C8CED8;border-bottom-color:#C8CED8;box-sizing:border-box;"></div>
<div style="left:132px;top:421px;width:12px;height:12px;background:linear-gradient(135deg,#FFFFFF 25%,#F2B48A);border:1px solid #7A8CA0;border-right-color:#C8CED8;border-bottom-color:#C8CED8;box-sizing:border-box;"></div>
<div style="left:226px;top:421px;width:12px;height:12px;background:linear-gradient(135deg,#FFFFFF 25%,#F2B48A);border:1px solid #7A8CA0;border-right-color:#C8CED8;border-bottom-color:#C8CED8;box-sizing:border-box;"></div>
<div class="t" style="left:149px;top:422px;font-size:12px;line-height:12px;color:#222;">Reserved</div>
<div class="t" style="left:245px;top:422px;font-size:12px;line-height:12px;color:#222;">Rent</div>
<div class="t" style="left:290px;top:422px;font-size:12px;line-height:12px;color:#222;">CAMERAHD</div>
<div class="t" style="left:396px;top:422px;font-size:12px;line-height:12px;color:#222;">CAMERAHD</div>
<div class="t" style="left:650px;top:422px;font-size:12px;line-height:12px;color:#222;">40d</div>
<div class="t" style="right:457px;top:422px;font-size:12px;line-height:12px;color:#222;text-align:right;">1</div>
<div class="t" style="left:735px;top:422px;font-size:12px;line-height:12px;color:#222;">Day</div>
<div class="t" style="right:327px;top:422px;font-size:12px;line-height:12px;color:#222;text-align:right;">100.00</div>
<div class="t" style="right:257px;top:422px;font-size:12px;line-height:12px;color:#222;text-align:right;">300.00</div>
<div class="t" style="right:187px;top:422px;font-size:12px;line-height:12px;color:#222;text-align:right;">900.00</div>
<div class="t" style="right:132px;top:422px;font-size:12px;line-height:12px;color:#222;text-align:right;">0.00</div>
<div class="t" style="right:72px;top:422px;font-size:12px;line-height:12px;color:#222;text-align:right;">100.00</div>
<div class="t" style="left:1118px;width:55px;top:422px;height:14px;overflow:hidden;font-size:12px;line-height:12px;color:#222"><div style="position:absolute;right:-3px;top:0">0.00</div></div>
<div style="left:13px;top:647px;width:1161px;height:16px;background:#EEEEEE;border-top:1px solid #7A8AA0;border-bottom:1px solid #7A8AA0;box-sizing:border-box;"></div>
<div style="left:13px;top:648px;width:15px;height:14px;background:#EEEEEE;box-shadow:inset 1px 1px 0 #fff;box-sizing:border-box;"></div>
<svg style="position:absolute;left:19px;top:652px" width="5" height="9" viewBox="0 0 5 9"><path d="M5 0v9L0 4.5z" fill="#222"/></svg>
<div style="left:28px;top:648px;width:542px;height:14px;background:linear-gradient(#F2BC96,#E89C6E);border:1px solid #FFC010;box-sizing:border-box;"></div>
<svg style="position:absolute;left:296px;top:651px" width="6" height="8" viewBox="0 0 6 8"><path d="M0.5 0v8M2.5 0v8M4.5 0v8" stroke="#B08070" stroke-width="0.8"/></svg>
<div style="left:1156px;top:648px;width:17px;height:14px;background:#EEEEEE;border-left:1px solid #A0AEBC;box-sizing:border-box;box-shadow:inset 1px 1px 0 #fff;"></div>
<svg style="position:absolute;left:1163px;top:652px" width="5" height="9" viewBox="0 0 5 9"><path d="M0 0v9L5 4.5z" fill="#222"/></svg>
<div class="t" style="left:70px;top:679px;font-size:14px;line-height:14px;color:#222;font-weight:bold;">Items</div>
<div style="left:120px;top:673px;width:100px;height:24px;background:#EEEEEE;border:1px solid #8A8A8A;box-sizing:border-box;"></div>
<div class="t" style="left:122px;top:678px;font-size:14px;line-height:14px;color:#222;font-weight:bold;">1400.00</div>
<div class="t" style="left:235px;top:679px;font-size:14px;line-height:14px;color:#222;font-weight:bold;">Labor</div>
<div style="left:287px;top:673px;width:100px;height:24px;background:#EEEEEE;border:1px solid #8A8A8A;box-sizing:border-box;"></div>
<div class="t" style="left:446px;top:679px;font-size:14px;line-height:14px;color:#222;font-weight:bold;">Sub Total</div>
<div style="left:525px;top:673px;width:100px;height:24px;background:#EEEEEE;border:1px solid #8A8A8A;box-sizing:border-box;"></div>
<div class="t" style="left:527px;top:678px;font-size:14px;line-height:14px;color:#222;font-weight:bold;">1400.00</div>
<div class="t" style="left:636px;top:679px;font-size:14px;line-height:14px;color:#222;font-weight:bold;">Tax</div>
<div style="left:670px;top:673px;width:100px;height:24px;background:#EEEEEE;border:1px solid #8A8A8A;box-sizing:border-box;"></div>
<div style="left:813px;top:673px;width:89px;height:23px;background:#fff;border:1px solid #B8B8B8;box-sizing:border-box;"></div>
<div class="t" style="left:842px;top:679px;font-size:14px;line-height:14px;color:#222;font-weight:bold;">Total</div>
<div style="left:906px;top:672px;width:100px;height:24px;background:#EEEEEE;border:2px solid #BE0A0A;box-sizing:border-box;"></div>
<div class="t" style="left:909px;top:678px;font-size:14px;line-height:14px;color:#111;font-weight:bold;">1400.00</div>
<div style="left:8px;top:708px;width:1172px;height:23px;border:1px solid #C8C8C8;border-top:1px solid #8A8A8A;border-left:1px solid #C8CCD0;box-sizing:border-box;background:#fff;"></div>
<div style="left:9px;top:708px;width:1px;height:22px;background:#808080;"></div>
<div style="left:9px;top:709px;width:1170px;height:1px;background:#B8B8B8;"></div>
</body></html>
